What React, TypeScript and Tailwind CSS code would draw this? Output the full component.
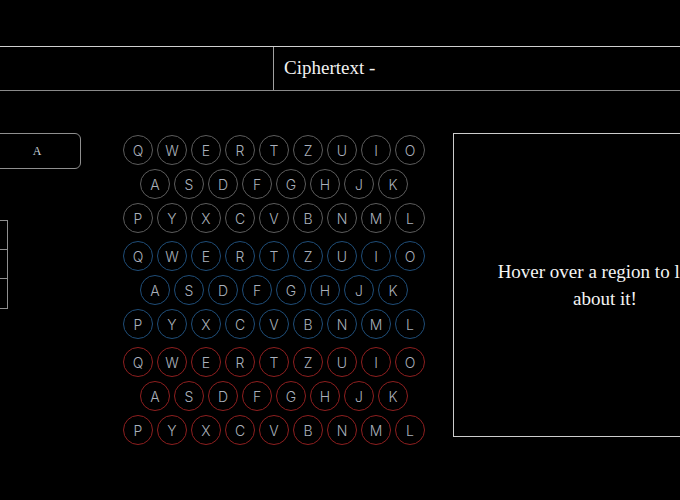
import React from 'react';

const rows = [
    ['Q', 'W', 'E', 'R', 'T', 'Z', 'U', 'I', 'O'],
    ['A', 'S', 'D', 'F', 'G', 'H', 'J', 'K'],
    ['P', 'Y', 'X', 'C', 'V', 'B', 'N', 'M', 'L'],
];

// one keyboard block per layer: keys, lampboard, plugboard
const groups = [
    { name: 'keys', border: 'border-[#5c5c5c]' },
    { name: 'lamps', border: 'border-[#1f4d78]' },
    { name: 'plugs', border: 'border-[#8e1f1f]' },
];

const Key = ({ letter, border }: { letter: string; border: string }) => (
    <div
        className={`m-[2px] flex h-[30px] w-[30px] items-center justify-center rounded-full border ${border} text-[14px] font-light text-[#aab0bb]`}
        style={{ fontFamily: 'Inter, "Open Sans", sans-serif' }}
    >
        {letter}
    </div>
);

const App = () => {
    return (
        <div
            className="min-h-screen w-full overflow-hidden bg-black pt-[46px] text-white"
            style={{ fontFamily: '"Liberation Serif", serif' }}
        >
            {/* output bar */}
            <div className="flex h-[45px] w-full border-t border-b border-t-[#cfcfcf] border-b-[#8a8a8a]">
                <div className="w-[274px] shrink-0 border-r border-[#a0a0a0]"></div>
                <div className="flex items-center pl-[10px] text-[19px] text-[#f2f2f2]">Ciphertext -</div>
            </div>

            <div className="mt-[42px] flex justify-center">
                {/* rotors + plug settings */}
                <div className="flex w-[158px] shrink-0 flex-col">
                    <div className="flex justify-end gap-2">
                        <div className="flex h-[36px] w-[62px] items-center justify-center rounded-md border border-[#8f8f8f] text-[12px] text-[#c8d0dc]">
                            A
                        </div>
                        <div className="flex h-[36px] w-[88px] items-center justify-center rounded-md border border-[#8f8f8f] text-[12px] text-[#c8d0dc]">
                            A
                        </div>
                    </div>
                    <div className="mt-[51px] flex w-[85px] flex-col divide-y divide-[#8f8f8f] border border-[#8f8f8f]">
                        <div className="h-[29px]"></div>
                        <div className="h-[29px]"></div>
                        <div className="h-[29px]"></div>
                    </div>
                </div>

                {/* keyboard */}
                <div className="ml-[40px] flex w-[306px] shrink-0 flex-col gap-1">
                    {groups.map((g) => (
                        <div key={g.name} className="flex flex-col">
                            {rows.map((row, i) => (
                                <div key={i} className="flex justify-center">
                                    {row.map((letter) => (
                                        <Key key={letter} letter={letter} border={g.border} />
                                    ))}
                                </div>
                            ))}
                        </div>
                    ))}
                </div>

                {/* info panel */}
                <div className="ml-[26px] flex h-[304px] w-[304px] shrink-0 items-center justify-center border border-[#cccccc] px-8 text-center text-[19px] leading-[27px] text-[#f4f4f4]">
                    Hover over a region to learn about it!
                </div>
            </div>
        </div>
    );
};

export default App;
